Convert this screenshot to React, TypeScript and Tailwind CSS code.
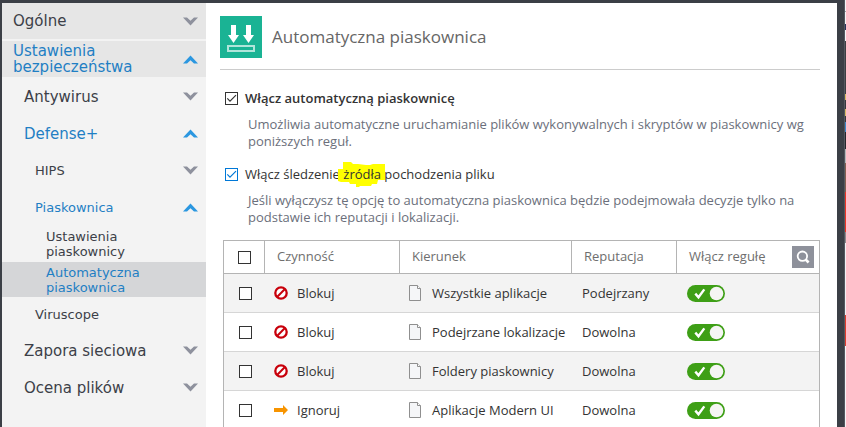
import type { ReactNode } from 'react'
import { useState } from 'react'

interface Rule {
  action: 'Blokuj' | 'Ignoruj'
  target: string
  reputation: string
}

interface NavLinkProps {
  children: ReactNode
  className: string
  arrow?: 'up' | 'down'
}

const rules: Rule[] = [
  { action: 'Blokuj', target: 'Wszystkie aplikacje', reputation: 'Podejrzany' },
  { action: 'Blokuj', target: 'Podejrzane lokalizacje', reputation: 'Dowolna' },
  { action: 'Blokuj', target: 'Foldery piaskownicy', reputation: 'Dowolna' },
  { action: 'Ignoruj', target: 'Aplikacje Modern UI', reputation: 'Dowolna' },
]

const edgeBands = [
  { id: 'top', className: 'h-[11px] bg-[#f4f4f6]' },
  { id: 'line', className: 'h-px bg-[#a0a0a5]' },
  { id: 'pale', className: 'h-[12px] bg-[#f4f4f6]' },
  { id: 'navy', className: 'h-[6px] bg-[#27335a]' },
  { id: 'blank', className: 'h-[11px] bg-[#f4f4f6]' },
  { id: 'dark', className: 'h-[53px] bg-[#3c3f42]' },
  { id: 'gold', className: 'h-[6px] bg-[#d9ba62]' },
  { id: 'dark2', className: 'h-[9px] bg-[#36373d]' },
  { id: 'gold2', className: 'h-[7px] bg-[#d9ba62]' },
  { id: 'dark3', className: 'h-[6px] bg-[#36373d]' },
  { id: 'blue', className: 'h-[10px] bg-[#3e87ca]' },
  { id: 'dark4', className: 'h-[17px] bg-[#25252a]' },
  { id: 'silver', className: 'h-[14px] bg-[#b5b7b9]' },
  { id: 'brown', className: 'h-[29px] bg-[#855f50]' },
  { id: 'red', className: 'h-[40px] bg-[#ed3324]' },
  { id: 'grey', className: 'h-[11px] bg-[#8d898c]' },
  { id: 'pale2', className: 'h-[72px] bg-[#f1f1f4]' },
  { id: 'red2', className: 'h-[31px] bg-[#df3b2c]' },
  { id: 'rest', className: 'grow bg-[#f4f4f6]' },
]

export default function App() {
  return (
    <div className="flex h-screen overflow-hidden bg-[#3b3f46] pt-[3px] pl-[2px]">
      <Sidebar />
      <main className="min-w-0 flex-1 bg-white pt-[13px] pr-[17px] pl-[14px] font-['Open_Sans','Noto_Sans',sans-serif] text-[13px] text-[#333]">
        <header className="flex items-center gap-[10px] border-b border-[#ccc] pb-[11px]">
          <SandboxIcon />
          <h1 className="text-[17px] leading-[24px] text-[#666]">Automatyczna piaskownica</h1>
        </header>
        <div className="pt-[18px] pl-[5px]">
          <Option id="auto" label={<b className="font-semibold">Włącz automatyczną piaskownicę</b>}>
            Umożliwia automatyczne uruchamianie plików wykonywalnych i skryptów w piaskownicy wg poniższych reguł.
          </Option>
          <Option
            id="origin"
            blue
            label={
              <>
                Włącz śledzenie{' '}
                <mark className="relative z-0 bg-transparent text-inherit">
                  <Marker />
                  żródła
                </mark>{' '}
                pochodzenia pliku
              </>
            }
          >
            Jeśli wyłączysz tę opcję to automatyczna piaskownica będzie podejmowała decyzje tylko na podstawie ich reputacji i lokalizacji.
          </Option>
        </div>
        <RulesTable />
      </main>
      <div className="-mt-[3px] w-[8px] shrink-0 border-r border-[#555961]" />
      <div className="-mt-[3px] flex w-px shrink-0 flex-col">
        {edgeBands.map(band => (
          <div key={band.id} className={band.className} />
        ))}
      </div>
    </div>
  )
}

function Sidebar() {
  return (
    <nav className="w-[204px] shrink-0 bg-[#f3f3f3] font-['DejaVu_Sans',Verdana,sans-serif] text-[#3c3f48]">
      <NavLink className="mb-[2px] h-[36px] bg-[#e6e6e6] pl-[11px] text-[15px] leading-[16px]" arrow="down">Ogólne</NavLink>
      <NavLink className="mb-px h-[36px] bg-[#e6e6e6] pl-[11px] text-[15px] leading-[16px] text-[#1f7fc4]" arrow="up">
        Ustawienia<br />bezpieczeństwa
      </NavLink>
      <NavLink className="h-[37px] pl-[22px] text-[15px] leading-[16px]" arrow="down">Antywirus</NavLink>
      <NavLink className="h-[37px] pl-[22px] text-[15px] leading-[16px] text-[#1f7fc4]" arrow="up">Defense+</NavLink>
      <NavLink className="h-[37px] pl-[33px] text-[13px] leading-[15px]" arrow="down">HIPS</NavLink>
      <NavLink className="h-[37px] pl-[33px] text-[13px] leading-[15px] text-[#1f7fc4]" arrow="up">Piaskownica</NavLink>
      <NavLink className="h-[36px] pl-[44px] text-[13px] leading-[15px]">Ustawienia<br />piaskownicy</NavLink>
      <NavLink className="h-[35px] bg-[#d5d6d8] pl-[44px] text-[13px] leading-[15px] text-[#1f7fc4]">
        Automatyczna<br />piaskownica
      </NavLink>
      <NavLink className="h-[35px] pl-[33px] text-[13px] leading-[15px]">Viruscope</NavLink>
      <NavLink className="h-[37px] pl-[22px] text-[15px] leading-[16px]" arrow="down">Zapora sieciowa</NavLink>
      <NavLink className="h-[37px] pl-[22px] text-[15px] leading-[16px]" arrow="down">Ocena plików</NavLink>
    </nav>
  )
}

function NavLink({ children, className, arrow }: NavLinkProps) {
  return (
    <a href="#" className={`flex items-center justify-between pr-[8px] ${className}`}>
      <span>{children}</span>
      {arrow && (
        <svg width="15" height="9" viewBox="0 0 15 9" aria-hidden="true">
          {arrow === 'down'
            ? <path d="M0 .5h4l3.5 3.2L11 .5h4L7.5 8.5z" fill="#8e919d" />
            : <path d="M0 8.5h4l3.5-3.2L11 8.5h4L7.5.5z" fill="#2b97e0" />}
        </svg>
      )}
    </a>
  )
}

function Option({ id, label, blue, children }: { id: string; label: ReactNode; blue?: boolean; children: ReactNode }) {
  return (
    <div className="mb-[14px]">
      <div className="flex items-center gap-[7px]">
        <CheckBox id={id} initial blue={blue} />
        <label htmlFor={id} className="leading-[20px]">{label}</label>
      </div>
      <p className="mt-[8px] pl-[23px] leading-[17px] text-[#6b6f7b]">{children}</p>
    </div>
  )
}

function CheckBox({ id, label, initial = false, blue }: { id: string; label?: string; initial?: boolean; blue?: boolean }) {
  const [checked, setChecked] = useState(initial)
  return (
    <span className={`relative block size-[13px] shrink-0 ${blue ? 'text-[#0078d7]' : 'text-[#333]'}`}>
      <input
        id={id}
        type="checkbox"
        aria-label={label}
        checked={checked}
        onChange={e => setChecked(e.target.checked)}
        className="block size-[13px] appearance-none border border-current bg-white"
      />
      {checked && (
        <svg className="pointer-events-none absolute inset-0" width="13" height="13" viewBox="0 0 13 13" fill="none" stroke="currentColor" strokeWidth="1.2" aria-hidden="true">
          <path d="M2.3 6.4L5 9.2L11 3.2" />
        </svg>
      )}
    </span>
  )
}

function RulesTable() {
  return (
    <table className="ml-[3px] w-[calc(100%-3px)] table-fixed border-separate border-spacing-0 border-t border-r border-l border-[#b4b4b4]">
      <colgroup>
        <col className="w-[41px]" />
        <col className="w-[135px]" />
        <col className="w-[172px]" />
        <col className="w-[105px]" />
        <col />
      </colgroup>
      <thead>
        <tr className="h-[33px] text-left text-[#6e6e6e] [&>th]:border-b [&>th]:border-[#b4b4b4] [&>th]:p-0 [&>th]:font-medium [&>th:not(:last-child)]:border-r">
          <th><div className="pl-[14px]"><CheckBox id="all" label="Zaznacz wszystko" /></div></th>
          <th><div className="pl-[12px]">Czynność</div></th>
          <th><div className="pl-[12px]">Kierunek</div></th>
          <th><div className="pl-[12px]">Reputacja</div></th>
          <th>
            <div className="flex items-center justify-between pr-[5px] pl-[12px]">
              Włącz regułę
              <button type="button" aria-label="Szukaj" className="grid size-[22px] place-items-center bg-[#8e919b]">
                <svg width="14" height="14" viewBox="0 0 14 14" fill="none" stroke="#fff" aria-hidden="true">
                  <circle cx="6.4" cy="6.2" r="4.7" strokeWidth="1.8" />
                  <path d="M9.6 9.5l3 3" strokeWidth="2.6" />
                </svg>
              </button>
            </div>
          </th>
        </tr>
      </thead>
      <tbody>
        {rules.map(rule => (
          <tr key={rule.target} className="h-[39px] odd:bg-[#f3f3f3] [&>td]:border-b [&>td]:border-[#d6d6d6] [&>td]:p-0">
            <td><div className="pl-[15px]"><CheckBox id={rule.target} label={rule.target} /></div></td>
            <td>
              <div className="flex items-center gap-[9px] pl-[9px]">
                {rule.action === 'Blokuj' ? <BlockIcon /> : <ArrowIcon />}
                <span className="pt-[2px]">{rule.action}</span>
              </div>
            </td>
            <td>
              <div className="flex items-center gap-[11px] pl-[9px] whitespace-nowrap">
                <DocumentIcon />
                <span className="pt-[2px]">{rule.target}</span>
              </div>
            </td>
            <td><div className="pt-[2px] pl-[10px]">{rule.reputation}</div></td>
            <td><div className="pl-[10px]"><Toggle label={rule.target} /></div></td>
          </tr>
        ))}
      </tbody>
    </table>
  )
}

function Toggle({ label }: { label: string }) {
  const [on, setOn] = useState(true)
  return (
    <button type="button" role="switch" aria-checked={on} aria-label={label} onClick={() => setOn(!on)} className="block">
      <svg width="38" height="17" viewBox="0 0 38 17" aria-hidden="true">
        <rect width="38" height="17" rx="8.5" fill={on ? '#3e9f16' : '#999'} />
        <circle cx={on ? 29.5 : 8.5} cy="8.5" r="6.8" fill="#f5f5f3" />
        {on && <path d="M8.3 8.6l3.2 3.7L17.3 4.4" fill="none" stroke="#fff" strokeWidth="2.4" />}
      </svg>
    </button>
  )
}

function SandboxIcon() {
  return (
    <svg className="shrink-0" width="42" height="42" viewBox="0 0 42 42" aria-hidden="true">
      <path d="M0 0h42v42H0z" fill="#1ab394" />
      <path d="M11 9h5v10h3l-5.5 8L8 19h3zM26 9h5v10h3l-5.5 8L23 19h3z" fill="#fff" />
      <path d="M8 30h26v5H8z" fill="none" stroke="#b0e5da" strokeWidth="2" />
    </svg>
  )
}

function Marker() {
  return (
    <svg className="absolute -top-[3px] -left-[5px] -z-10" width="48" height="25" viewBox="0 0 48 25" aria-hidden="true">
      <path d="M5 0h8l2 2h5l8 1h4l3-1h12v16h-7l-1 4h-5l-1 2H22l-1 1h-3v-3h-6l-1-2H3l-3-1V7h5z" fill="#ff0" />
    </svg>
  )
}

function BlockIcon() {
  return (
    <svg width="14" height="14" viewBox="0 0 14 14" fill="none" stroke="#c8000b" aria-hidden="true">
      <circle cx="7" cy="7" r="5.7" strokeWidth="2.3" fill="#fff" />
      <path d="M3.3 10.7l7.4-7.4" strokeWidth="2" />
    </svg>
  )
}

function ArrowIcon() {
  return (
    <svg width="14" height="10" viewBox="0 0 14 10" aria-hidden="true">
      <path d="M0 3h9V0l5 5-5 5V7H0z" fill="#f79400" />
    </svg>
  )
}

function DocumentIcon() {
  return (
    <svg width="12" height="16" viewBox="0 0 12 16" aria-hidden="true">
      <path d="M.5.5h8l3 3v12H.5z" fill="#f5f6f8" stroke="#8f8f8f" />
      <path d="M8.5.5v3h3" fill="#fff" stroke="#8f8f8f" />
    </svg>
  )
}
